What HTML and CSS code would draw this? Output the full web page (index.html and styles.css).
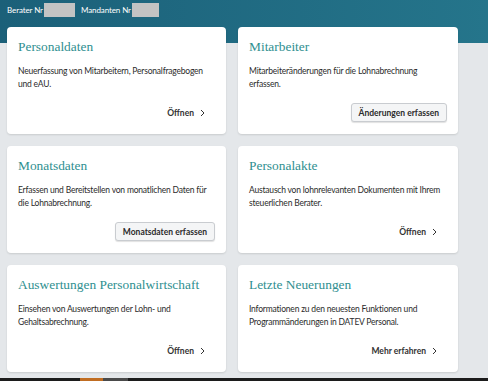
FILE: index.html
```html
<!DOCTYPE html>
<html lang="de">
<head>
    <meta charset="UTF-8">
    <title>DATEV Personal</title>
    <link rel="stylesheet" href="styles.css">
</head>
<body>
<div class="page">
  <div class="topbar">
    <span>Berater Nr</span><span class="masked"></span>
    <span class="gapLeft">Mandanten Nr</span><span class="masked short"></span>
  </div>

  <div class="tileGrid">
    <div class="tile">
      <h2>Personaldaten</h2>
      <p>Neuerfassung von Mitarbeitern, Personalfragebogen und eAU.</p>
      <div class="tileActions"><a class="moreLink" href="#">Öffnen <svg class="chev" viewBox="0 0 5 8"><polyline points="1,1 4,4 1,7"/></svg></a></div>
    </div>
    <div class="tile">
      <h2>Mitarbeiter</h2>
      <p>Mitarbeiteränderungen für die Lohnabrechnung erfassen.</p>
      <div class="tileActions"><button class="tileButton">Änderungen erfassen</button></div>
    </div>
    <div class="tile">
      <h2>Monatsdaten</h2>
      <p>Erfassen und Bereitstellen von monatlichen Daten für die Lohnabrechnung.</p>
      <div class="tileActions"><button class="tileButton">Monatsdaten erfassen</button></div>
    </div>
    <div class="tile">
      <h2>Personalakte</h2>
      <p>Austausch von lohnrelevanten Dokumenten mit Ihrem steuerlichen Berater.</p>
      <div class="tileActions"><a class="moreLink" href="#">Öffnen <svg class="chev" viewBox="0 0 5 8"><polyline points="1,1 4,4 1,7"/></svg></a></div>
    </div>
    <div class="tile">
      <h2>Auswertungen Personalwirtschaft</h2>
      <p>Einsehen von Auswertungen der Lohn- und Gehaltsabrechnung.</p>
      <div class="tileActions"><a class="moreLink" href="#">Öffnen <svg class="chev" viewBox="0 0 5 8"><polyline points="1,1 4,4 1,7"/></svg></a></div>
    </div>
    <div class="tile">
      <h2>Letzte Neuerungen</h2>
      <p>Informationen zu den neuesten Funktionen und Programmänderungen in DATEV Personal.</p>
      <div class="tileActions"><a class="moreLink" href="#">Mehr erfahren <svg class="chev" viewBox="0 0 5 8"><polyline points="1,1 4,4 1,7"/></svg></a></div>
    </div>
  </div>
</div>

<div class="taskbar">
  <span class="task active"></span><span class="task"></span>
</div>
</body>
</html>
```

FILE: styles.css
```css
html, body {
    margin: 0;
    height: 100%;
}

body {
    font-family: "Lato", "Noto Sans", sans-serif;
    color: #2b2b2b;
    background: linear-gradient(to right, #1b6079, #25758b) no-repeat;
    background-size: 100% 43px;
    background-color: #e4e7ea;
    overflow: hidden;
}

.page {
    height: 378px;
}

.topbar {
    height: 20px;
    display: flex;
    align-items: center;
    padding-left: 7px;
    font-size: 8px;
    letter-spacing: -0.1px;
    color: #ffffff;
}

.masked {
    width: 31px;
    height: 14px;
    margin-left: 1px;
    background: #c3c3c3;
}

.masked.short {
    width: 27px;
}

.gapLeft {
    margin-left: 6px;
}

.tileGrid {
    display: grid;
    grid-template-columns: 219px 220px;
    grid-auto-rows: 107px;
    gap: 12px;
    padding: 7px 0 0 7px;
}

.tile {
    background: #ffffff;
    border-radius: 4px;
    box-shadow: 0 1px 2px rgba(0, 0, 0, 0.12);
    padding: 11px 11px 12px 11px;
    display: flex;
    flex-direction: column;
}

.tile h2 {
    margin: 0;
    font-family: "Liberation Serif", serif;
    font-weight: normal;
    font-size: 13.4px;
    line-height: 17px;
    color: #2f8f90;
}

.tile p {
    margin: 10px 0 0 0;
    font-size: 8.5px;
    line-height: 13px;
    letter-spacing: -0.2px;
}

.tileActions {
    margin-top: auto;
    height: 19px;
    display: flex;
    justify-content: flex-end;
    align-items: center;
}

.moreLink {
    display: flex;
    align-items: center;
    font-size: 8.5px;
    font-weight: bold;
    color: #333333;
    text-decoration: none;
    padding-right: 10px;
}

.chev {
    width: 5px;
    height: 8px;
    margin-left: 6px;
    fill: none;
    stroke: #333333;
    stroke-width: 1;
}

.tileButton {
    height: 19px;
    padding: 0 7px;
    font-family: "Lato", "Noto Sans", sans-serif;
    font-size: 8.5px;
    font-weight: bold;
    color: #2b2b2b;
    background: #f4f5f6;
    border: 1px solid #c9ccd0;
    border-radius: 3px;
    box-shadow: 0 1px 1px rgba(0, 0, 0, 0.12);
}

.taskbar {
    height: 3px;
    background: #1c1c1c;
    display: flex;
    padding-left: 80px;
}

.task {
    width: 25px;
    background: #4a4a4a;
}

.task.active {
    width: 23px;
    background: #c06d22;
}
```
